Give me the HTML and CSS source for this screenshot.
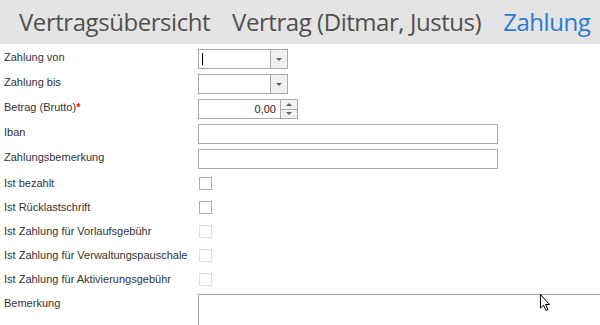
FILE: index.html
```html
<!DOCTYPE html>
<html lang="de">
<head>
    <meta charset="UTF-8">
    <title>Zahlung</title>
    <link rel="stylesheet" href="styles.css">
</head>
<body>
    <div class="crumbs">
        <span class="crumb">Vertragsübersicht</span>
        <span class="crumb">Vertrag (Ditmar, Justus)</span>
        <span class="crumb current">Zahlung</span>
    </div>

    <form class="form">
        <div class="row">
            <label class="lbl">Zahlung von</label>
            <div class="combo">
                <div class="combo-text"><span class="caret"></span></div>
                <div class="combo-btn"><span class="arrow-down"></span></div>
            </div>
        </div>

        <div class="row">
            <label class="lbl">Zahlung bis</label>
            <div class="combo">
                <div class="combo-text"></div>
                <div class="combo-btn"><span class="arrow-down"></span></div>
            </div>
        </div>

        <div class="row">
            <label class="lbl">Betrag (Brutto)<span class="req">*</span></label>
            <div class="spin">
                <div class="spin-text">0,00</div>
                <div class="spin-btns">
                    <div class="spin-btn"><span class="arrow-up"></span></div>
                    <div class="spin-btn"><span class="arrow-down"></span></div>
                </div>
            </div>
        </div>

        <div class="row">
            <label class="lbl">Iban</label>
            <div class="textbox"></div>
        </div>

        <div class="row">
            <label class="lbl">Zahlungsbemerkung</label>
            <div class="textbox"></div>
        </div>

        <div class="row check">
            <label class="lbl">Ist bezahlt</label>
            <span class="cb"></span>
        </div>

        <div class="row check">
            <label class="lbl">Ist Rücklastschrift</label>
            <span class="cb"></span>
        </div>

        <div class="row check">
            <label class="lbl">Ist Zahlung für Vorlaufsgebühr</label>
            <span class="cb disabled"></span>
        </div>

        <div class="row check">
            <label class="lbl">Ist Zahlung für Verwaltungspauschale</label>
            <span class="cb disabled"></span>
        </div>

        <div class="row check">
            <label class="lbl">Ist Zahlung für Aktivierungsgebühr</label>
            <span class="cb disabled"></span>
        </div>

        <div class="row last">
            <label class="lbl">Bemerkung</label>
            <div class="memo"></div>
        </div>
    </form>

    <!-- Mauszeiger -->
    <svg class="pointer" width="14" height="20" viewBox="0 0 14 20">
        <path d="M1.5 1.5 L1.5 15 L4.5 12.2 L7 17.5 L9 16.6 L6.6 11.5 L10.5 11.5 Z" fill="#fff" stroke="#000" stroke-width="1" stroke-linejoin="miter"/>
    </svg>
</body>
</html>
```

FILE: styles.css
```css
body {
    margin: 0;
    width: 600px;
    height: 325px;
    overflow: hidden;
    background: #fff;
    font-family: "Liberation Sans", Arial, sans-serif;
    font-size: 11px;
    color: #333;
    position: relative;
}

.crumbs {
    height: 44px;
    background: #e4e4e4;
    display: flex;
    gap: 22px;
    padding-left: 19px;
    font-family: "Open Sans", "Noto Sans", sans-serif;
    font-size: 24px;
    letter-spacing: -0.45px;
    line-height: 44px;
    color: #505050;
    white-space: nowrap;
}

.crumb.current {
    color: #2a7bd4;
}

.form {
    padding: 5px 0 0 4px;
}

.row {
    display: flex;
    height: 20px;
    margin-bottom: 5px;
}

.row.check {
    height: 19px;
}

.row.last {
    height: 31px;
    margin-bottom: 0;
}

.lbl {
    width: 194px;
    flex-shrink: 0;
    line-height: 14px;
    padding-top: 1px;
    color: #333;
}

.row.check .lbl,
.row.last .lbl {
    padding-top: 2px;
}

.req {
    color: #e01010;
    font-weight: bold;
}

.combo {
    display: flex;
    width: 90px;
    height: 20px;
    box-sizing: border-box;
    border: 1px solid #a9a9a9;
}

.combo-text {
    flex: 1;
    position: relative;
}

.caret {
    position: absolute;
    left: 3px;
    top: 3px;
    width: 1px;
    height: 12px;
    background: #000;
}

.combo-btn {
    width: 16px;
    border-left: 1px solid #a9a9a9;
    background: #f1f1f1;
    display: flex;
    align-items: center;
    justify-content: center;
}

.arrow-down {
    width: 0;
    height: 0;
    border-left: 3px solid transparent;
    border-right: 3px solid transparent;
    border-top: 3px solid #606060;
}

.arrow-up {
    width: 0;
    height: 0;
    border-left: 3px solid transparent;
    border-right: 3px solid transparent;
    border-bottom: 3px solid #606060;
}

.spin {
    display: flex;
    height: 20px;
}

.spin-text {
    width: 83px;
    box-sizing: border-box;
    border: 1px solid #a9a9a9;
    text-align: right;
    padding-right: 4px;
    line-height: 18px;
    color: #222;
}

.spin-btns {
    display: flex;
    flex-direction: column;
    width: 17px;
}

.spin-btn {
    flex: 1;
    box-sizing: border-box;
    border: 1px solid #a9a9a9;
    border-left: none;
    background: #f1f1f1;
    display: flex;
    align-items: center;
    justify-content: center;
}

.spin-btn + .spin-btn {
    border-top: none;
}

.textbox {
    width: 300px;
    height: 20px;
    box-sizing: border-box;
    border: 1px solid #a9a9a9;
}

.cb {
    width: 13px;
    height: 13px;
    box-sizing: border-box;
    border: 1px solid #a9a9a9;
    margin: 3px 0 0 1px;
}

.cb.disabled {
    border-color: #dedede;
}

.memo {
    flex: 1;
    height: 31px;
    box-sizing: border-box;
    border: 1px solid #a0a0a0;
    border-right: none;
    border-bottom: none;
}

.pointer {
    position: absolute;
    left: 539px;
    top: 293px;
}
```
